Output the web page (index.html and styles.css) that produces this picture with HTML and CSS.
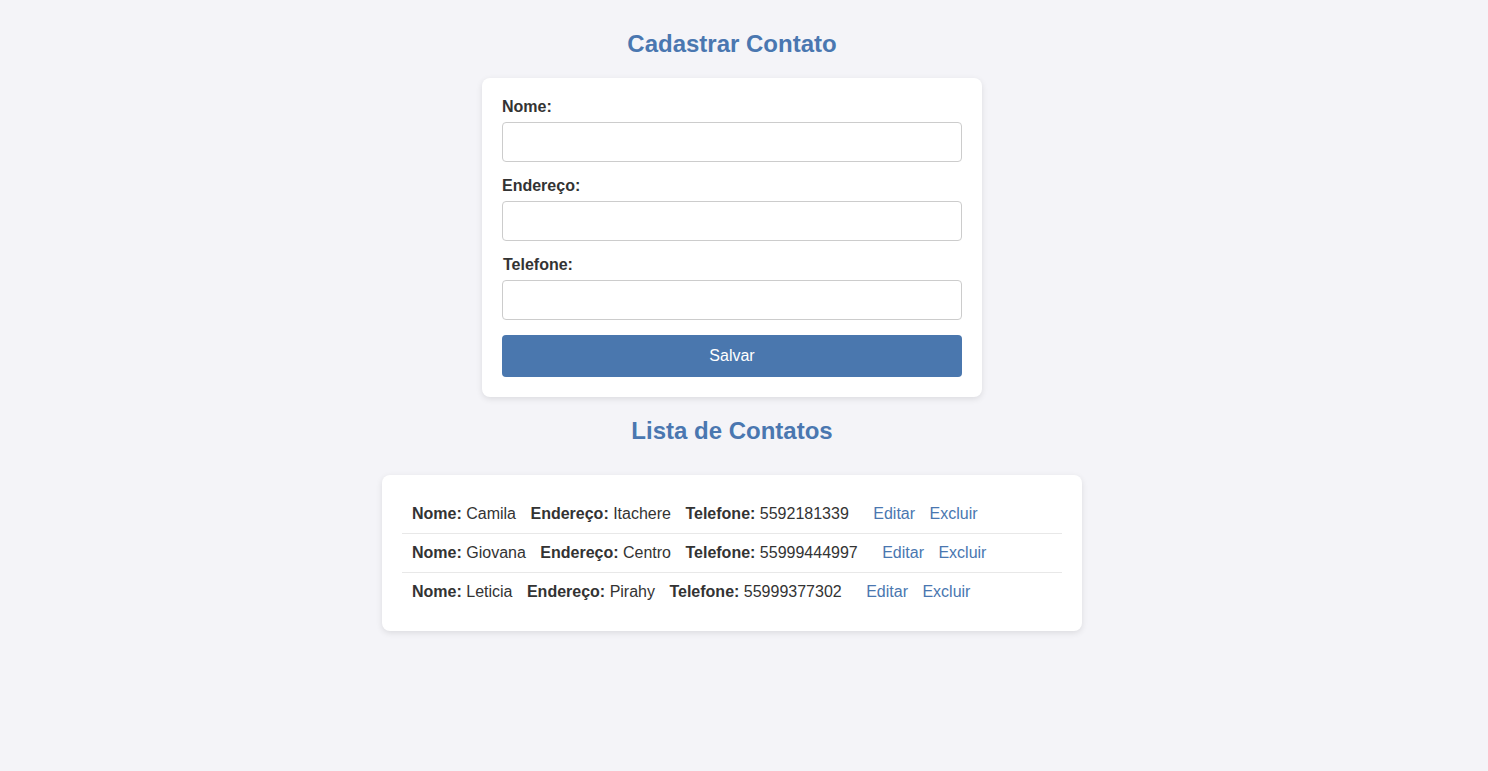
FILE: index.html
```html
<!DOCTYPE html>
<html lang="pt-BR">
<head>
<meta charset="utf-8">
<title>Contatos</title>
<link rel="stylesheet" href="styles.css">
</head>
<body>
  <h2 class="title">Cadastrar Contato</h2>
  <form class="card form-card">
    <label class="field-label" for="nome">Nome:</label>
    <input class="field-input" id="nome" type="text">
    <label class="field-label" for="endereco">Endereço:</label>
    <input class="field-input" id="endereco" type="text">
    <label class="field-label field-label-shift" for="telefone">Telefone:</label>
    <input class="field-input" id="telefone" type="text">
    <button class="save-btn" type="button">Salvar</button>
  </form>

  <h2 class="title title-list">Lista de Contatos</h2>
  <ul class="card list-card">
    <li class="row">
      <span class="item"><strong>Nome:</strong> Camila</span>
      <span class="item"><strong>Endereço:</strong> Itachere</span>
      <span class="item"><strong>Telefone:</strong> 5592181339</span>
      <span class="actions"><a class="act">Editar</a> <a class="act">Excluir</a></span>
    </li>
    <li class="row">
      <span class="item"><strong>Nome:</strong> Giovana</span>
      <span class="item"><strong>Endereço:</strong> Centro</span>
      <span class="item"><strong>Telefone:</strong> 55999444997</span>
      <span class="actions"><a class="act">Editar</a> <a class="act">Excluir</a></span>
    </li>
    <li class="row">
      <span class="item"><strong>Nome:</strong> Leticia</span>
      <span class="item"><strong>Endereço:</strong> Pirahy</span>
      <span class="item"><strong>Telefone:</strong> 55999377302</span>
      <span class="actions"><a class="act">Editar</a> <a class="act">Excluir</a></span>
    </li>
  </ul>
</body>
</html>
```
FILE: styles.css
```css
html, body {
  margin: 0;
}
body {
  padding: 10px 24px 10px 0;
  background: #f4f4f8;
  font-family: "Liberation Sans", Arial, sans-serif;
  font-size: 16px;
  color: #333;
}
.title {
  text-align: center;
  color: #4a77b0;
  font-size: 24px;
  font-weight: bold;
  margin: 20px 0;
}
.title-list {
  margin-top: 20px;
  margin-bottom: 30px;
}
.card {
  background: #fff;
  border-radius: 8px;
  box-shadow: 0 2px 6px rgba(0, 0, 0, 0.1);
  box-sizing: border-box;
  margin-left: auto;
  margin-right: auto;
}
.form-card {
  width: 500px;
  padding: 20px;
  display: flex;
  flex-direction: column;
}
.field-label {
  font-weight: bold;
  line-height: 18px;
  margin-bottom: 6px;
}
.field-label-shift {
  margin-left: 1px;
}
.field-input {
  font-family: inherit;
  font-size: 16px;
  height: 40px;
  padding: 10px;
  border: 1px solid #ccc;
  border-radius: 4px;
  margin: 0 0 15px;
  box-sizing: border-box;
  width: 100%;
  outline: none;
}
.save-btn {
  font-family: inherit;
  font-size: 16px;
  height: 42px;
  background: #4a77ae;
  color: #fff;
  border: none;
  border-radius: 4px;
  padding: 12px;
  cursor: pointer;
}
.list-card {
  width: 700px;
  padding: 20px;
  list-style: none;
  margin-top: 0;
  margin-bottom: 0;
}
.row {
  padding: 10px;
  border-bottom: 1px solid #e8e8e8;
  line-height: 18px;
}
.row:last-child {
  border-bottom: none;
}
.item {
  margin-right: 10px;
}
.actions {
  margin-left: 10px;
}
.act {
  color: #4a77b0;
  margin-right: 10px;
  cursor: pointer;
}
```
